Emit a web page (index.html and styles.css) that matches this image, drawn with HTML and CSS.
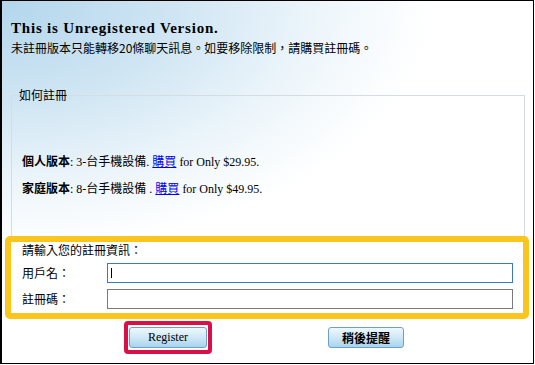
FILE: index.html
```html
<!DOCTYPE html>
<html lang="zh-Hant">
<head>
    <meta charset="UTF-8">
    <meta name="viewport" content="width=device-width, initial-scale=1.0">
    <title>Unregistered Version</title>
    <link rel="stylesheet" href="styles.css">
</head>
<body>
    <div class="window">
        <div class="header">
            <h1>This is Unregistered Version.</h1>
            <p class="notice">未註冊版本只能轉移20條聊天訊息。如要移除限制，請購買註冊碼。</p>
        </div>

        <fieldset class="how-to">
            <legend>如何註冊</legend>
            <p class="plan"><b>個人版本</b>: 3-台手機設備. <a href="#">購買</a> for Only $29.95.</p>
            <p class="plan"><b>家庭版本</b>: 8-台手機設備 . <a href="#">購買</a> for Only $49.95.</p>
        </fieldset>

        <div class="register-box">
            <div class="register-title">請輸入您的註冊資訊：</div>
            <label for="userName">用戶名：</label>
            <div class="field">
                <input type="text" id="userName" class="focused">
                <span class="caret"></span>
            </div>
            <label for="regCode">註冊碼：</label>
            <div class="field">
                <input type="text" id="regCode">
            </div>
        </div>

        <div class="buttons">
            <div class="highlight">
                <button class="btn btn-register">Register</button>
            </div>
            <button class="btn btn-later">稍後提醒</button>
        </div>
    </div>
</body>
</html>
```

FILE: styles.css
```css
body {
    margin: 0;
    background-color: #fff;
    font-family: "Noto Sans CJK TC", sans-serif;
    font-size: 12px;
    color: #000;
}
.window {
    box-sizing: border-box;
    width: 534px;
    height: 364px;
    border: 1px solid #000;
    border-left-width: 2px;
    background-color: #fff;
    background-image:
        radial-gradient(ellipse 430px 250px at 0 0, #b3d6ec 0%, #cfe5f3 40%, #eef6fb 75%, rgba(255,255,255,0) 100%);
}
.header {
    padding: 18px 0 0 9px;
}
h1 {
    margin: 0;
    font-family: "Liberation Serif", serif;
    font-size: 15px;
    line-height: 18px;
    letter-spacing: 0.8px;
    font-weight: bold;
}
.notice {
    margin: 3px 0 0;
    line-height: 16px;
}
.how-to {
    margin: 31px 8px 0 9px;
    padding: 45px 10px 34px;
    border: 1px solid #d6dde2;
    border-bottom: none;
}
.how-to legend {
    margin-left: -4px;
    padding: 0 1px;
    line-height: 16px;
}
.plan {
    margin: 0;
    font-family: "Liberation Serif", "Noto Sans CJK TC", serif;
    line-height: 25px;
}
.plan b {
    font-family: "Noto Sans CJK TC", sans-serif;
}
.plan a {
    color: #0000ee;
    font-family: "Noto Sans CJK TC", sans-serif;
}
.register-box {
    display: grid;
    grid-template-columns: 85px 406px;
    row-gap: 6px;
    align-items: center;
    margin: 0 4px 0 3px;
    padding: 0 10px 4px 11px;
    border: 6px solid #fac51c;
    border-radius: 5px;
    background-color: #fff;
}
.register-title {
    grid-column: 1 / 3;
    line-height: 16px;
    margin-bottom: -1px;
}
.register-box label {
    line-height: 20px;
}
.field {
    position: relative;
    height: 20px;
}
.field input {
    box-sizing: border-box;
    width: 406px;
    height: 20px;
    margin: 0;
    padding: 0 3px;
    border: 1px solid #7a7a7a;
    background: #fff;
    outline: none;
}
.field input.focused {
    border-color: #3a7cb4;
}
.caret {
    position: absolute;
    left: 4px;
    top: 5px;
    width: 1px;
    height: 10px;
    background-color: #000;
}
.buttons {
    display: flex;
    align-items: center;
    gap: 116px;
    margin-top: 2px;
    padding-left: 122px;
}
.highlight {
    padding: 2px 1px;
    border: 4px solid #d91048;
    border-radius: 4px;
}
.btn {
    display: block;
    height: 21px;
    padding: 0;
    border: 1px solid #6e9fc7;
    border-radius: 3px;
    background: linear-gradient(#eef8fd, #cfe8f6 50%, #a7d4ed);
    color: #000;
    font-size: 12px;
    cursor: pointer;
}
.btn-register {
    width: 78px;
    font-family: "Liberation Serif", serif;
}
.btn-later {
    width: 76px;
    font-family: "Noto Sans CJK TC", sans-serif;
    font-weight: bold;
}
```
